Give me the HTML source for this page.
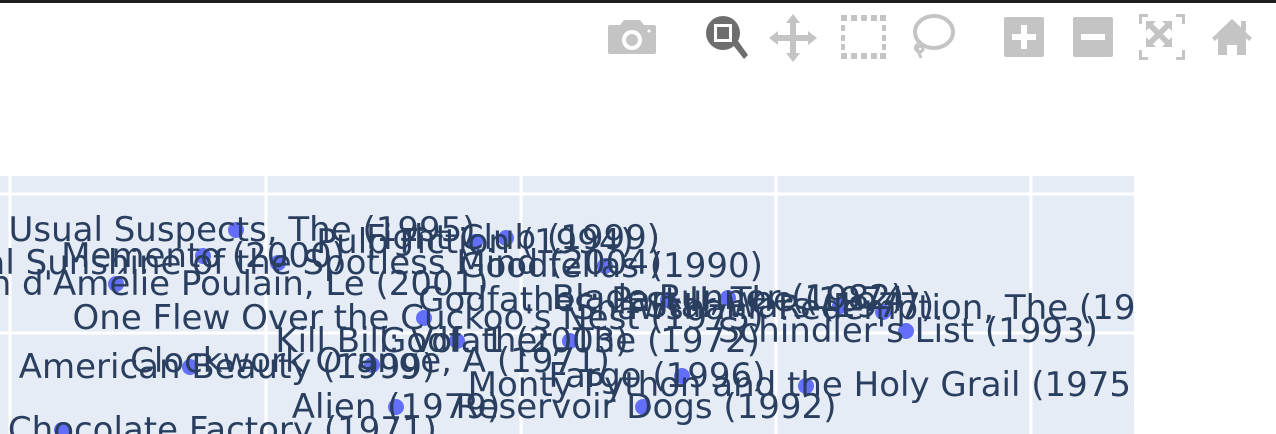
<!DOCTYPE html>
<html><head><meta charset="utf-8"><style>
html,body{margin:0;padding:0;width:1276px;height:434px;overflow:hidden;background:#fff}
svg{display:block}
text{font-family:"DejaVu Sans","Liberation Sans",sans-serif;font-size:34px;fill:#2a3f5f;text-anchor:middle}
</style></head><body>
<svg width="1276" height="434" viewBox="0 0 1276 434">
<rect x="0" y="0" width="1276" height="3" fill="#1e1e1e"/>
<g fill="#c4c4c4">
 <path d="M610 25h10l4-5h16l4 5h10a2 2 0 0 1 2 2v25a2 2 0 0 1-2 2h-44a2 2 0 0 1-2-2v-25a2 2 0 0 1 2-2z"/>
 <circle cx="632" cy="40" r="10" fill="#fff"/><circle cx="632" cy="40" r="6"/>
 <circle cx="649" cy="31" r="1.5" fill="#fff"/>
 <circle cx="723" cy="33" r="17" fill="#6e6e6e"/>
 <rect x="714" y="24" width="18" height="18" fill="#fff"/><rect x="717" y="27" width="12" height="12" fill="#6e6e6e"/>
 <path d="M733 45l5-4 10 14-4 4z" fill="#6e6e6e"/>
 <path d="M793 14l7 9h-4v12h12v-4l9 7-9 7v-4h-12v12h4l-7 9-7-9h4v-12h-12v4l-9-7 9-7v4h12v-12h-4z"/>
 <g>
  <rect x="841" y="15" width="6" height="6"/><rect x="851" y="15" width="6" height="6"/><rect x="861" y="15" width="6" height="6"/><rect x="871" y="15" width="6" height="6"/><rect x="880" y="15" width="6" height="6"/>
  <rect x="841" y="53" width="6" height="6"/><rect x="851" y="53" width="6" height="6"/><rect x="861" y="53" width="6" height="6"/><rect x="871" y="53" width="6" height="6"/><rect x="880" y="53" width="6" height="6"/>
  <rect x="841" y="25" width="4" height="6"/><rect x="841" y="35" width="4" height="6"/><rect x="841" y="44" width="4" height="6"/>
  <rect x="882" y="25" width="4" height="6"/><rect x="882" y="35" width="4" height="6"/><rect x="882" y="44" width="4" height="6"/>
 </g>
 <ellipse cx="934" cy="32" rx="19" ry="16" fill="none" stroke="#c4c4c4" stroke-width="4"/>
 <path d="M918 44c-6 4 0 10 4 7c3-3-2-7-5-3l4 10" fill="none" stroke="#c4c4c4" stroke-width="3"/>
 <rect x="1004" y="17" width="40" height="40" rx="2"/>
 <rect x="1021" y="25" width="6" height="24" fill="#fff"/><rect x="1012" y="34" width="24" height="6" fill="#fff"/>
 <rect x="1073" y="17" width="40" height="40" rx="2"/>
 <rect x="1081" y="34" width="24" height="6" fill="#fff"/>
 <path d="M1139 14h9v3h-6v7h-3zM1176 14h9v10h-3v-7h-6zM1139 50h3v7h6v3h-9zM1182 50h3v10h-9v-3h6z"/>
 <path d="M1146 21h10l-3 3 6 6 6-6-3-3h10v10l-3-3-6 6 6 6 3-3v10h-10l3-3-6-6-6 6 3 3h-10v-10l3 3 6-6-6-6-3 3z"/>
 <path d="M1232 19l20 19-3 3-17-16-17 16-3-3z"/>
 <rect x="1241" y="21" width="5" height="10"/>
 <path d="M1218 38l14-13 14 13v17h-9v-10h-10v10h-9z"/>
</g>
<rect x="0" y="176" width="1134" height="258" fill="#e5ecf6"/>
<g stroke="#fff" stroke-width="3">
 <line x1="10" y1="176" x2="10" y2="434"/><line x1="266" y1="176" x2="266" y2="434"/>
 <line x1="521" y1="176" x2="521" y2="434"/><line x1="776" y1="176" x2="776" y2="434"/>
 <line x1="1031" y1="176" x2="1031" y2="434"/>
 <line x1="0" y1="194" x2="1134" y2="194"/><line x1="0" y1="333" x2="1134" y2="333"/>
</g>
<defs><clipPath id="c"><rect x="0" y="176" width="1134" height="258"/></clipPath></defs>
<g clip-path="url(#c)">
<g fill="#636efa">
 <circle cx="236" cy="230" r="8"/><circle cx="506" cy="238" r="8"/><circle cx="475" cy="242" r="8"/>
 <circle cx="203" cy="256" r="8"/><circle cx="278" cy="263" r="8"/><circle cx="605" cy="266" r="8"/>
 <circle cx="116" cy="284" r="8"/><circle cx="668" cy="300" r="8"/><circle cx="728" cy="298" r="8"/>
 <circle cx="840" cy="306" r="8"/><circle cx="883" cy="312" r="8"/><circle cx="424" cy="318" r="8"/>
 <circle cx="457" cy="341" r="8"/><circle cx="570" cy="341" r="8"/><circle cx="906" cy="331" r="8"/>
 <circle cx="190" cy="367" r="8"/><circle cx="372" cy="365" r="8"/><circle cx="682" cy="376" r="8"/>
 <circle cx="806" cy="386" r="8"/><circle cx="396" cy="407" r="8"/><circle cx="643" cy="407" r="8"/>
 <circle cx="62" cy="430" r="8"/>
</g>
<text x="242" y="241">Usual Suspects, The (1995)</text>
<text x="513" y="249">Fight Club (1999)</text>
<text x="475" y="253">Pulp Fiction (1994)</text>
<text x="203" y="267">Memento (2000)</text>
<text x="278" y="274">Eternal Sunshine of the Spotless Mind (2004)</text>
<text x="611" y="277">Goodfellas (1990)</text>
<text x="116" y="295">Fabuleux destin d'Amélie Poulain, Le (2001)</text>
<text x="668" y="311">Godfather: Part II, The (1974)</text>
<text x="728" y="309">Blade Runner (1982)</text>
<text x="790" y="317">Star Wars (1977)</text>
<text x="883" y="319">Shawshank Redemption, The (1994)</text>
<text x="418" y="329">One Flew Over the Cuckoo's Nest (1975)</text>
<text x="452" y="352">Kill Bill: Vol. 1 (2003)</text>
<text x="570" y="352">Godfather, The (1972)</text>
<text x="908" y="342">Schindler's List (1993)</text>
<text x="227" y="378">American Beauty (1999)</text>
<text x="370" y="372">Clockwork Orange, A (1971)</text>
<text x="657" y="387">Fargo (1996)</text>
<text x="806" y="396">Monty Python and the Holy Grail (1975)</text>
<text x="396" y="418">Alien (1979)</text>
<text x="646" y="418">Reservoir Dogs (1992)</text>
<text x="62" y="441">Willy Wonka &amp; the Chocolate Factory (1971)</text>
</g>
</svg>
</body></html>
